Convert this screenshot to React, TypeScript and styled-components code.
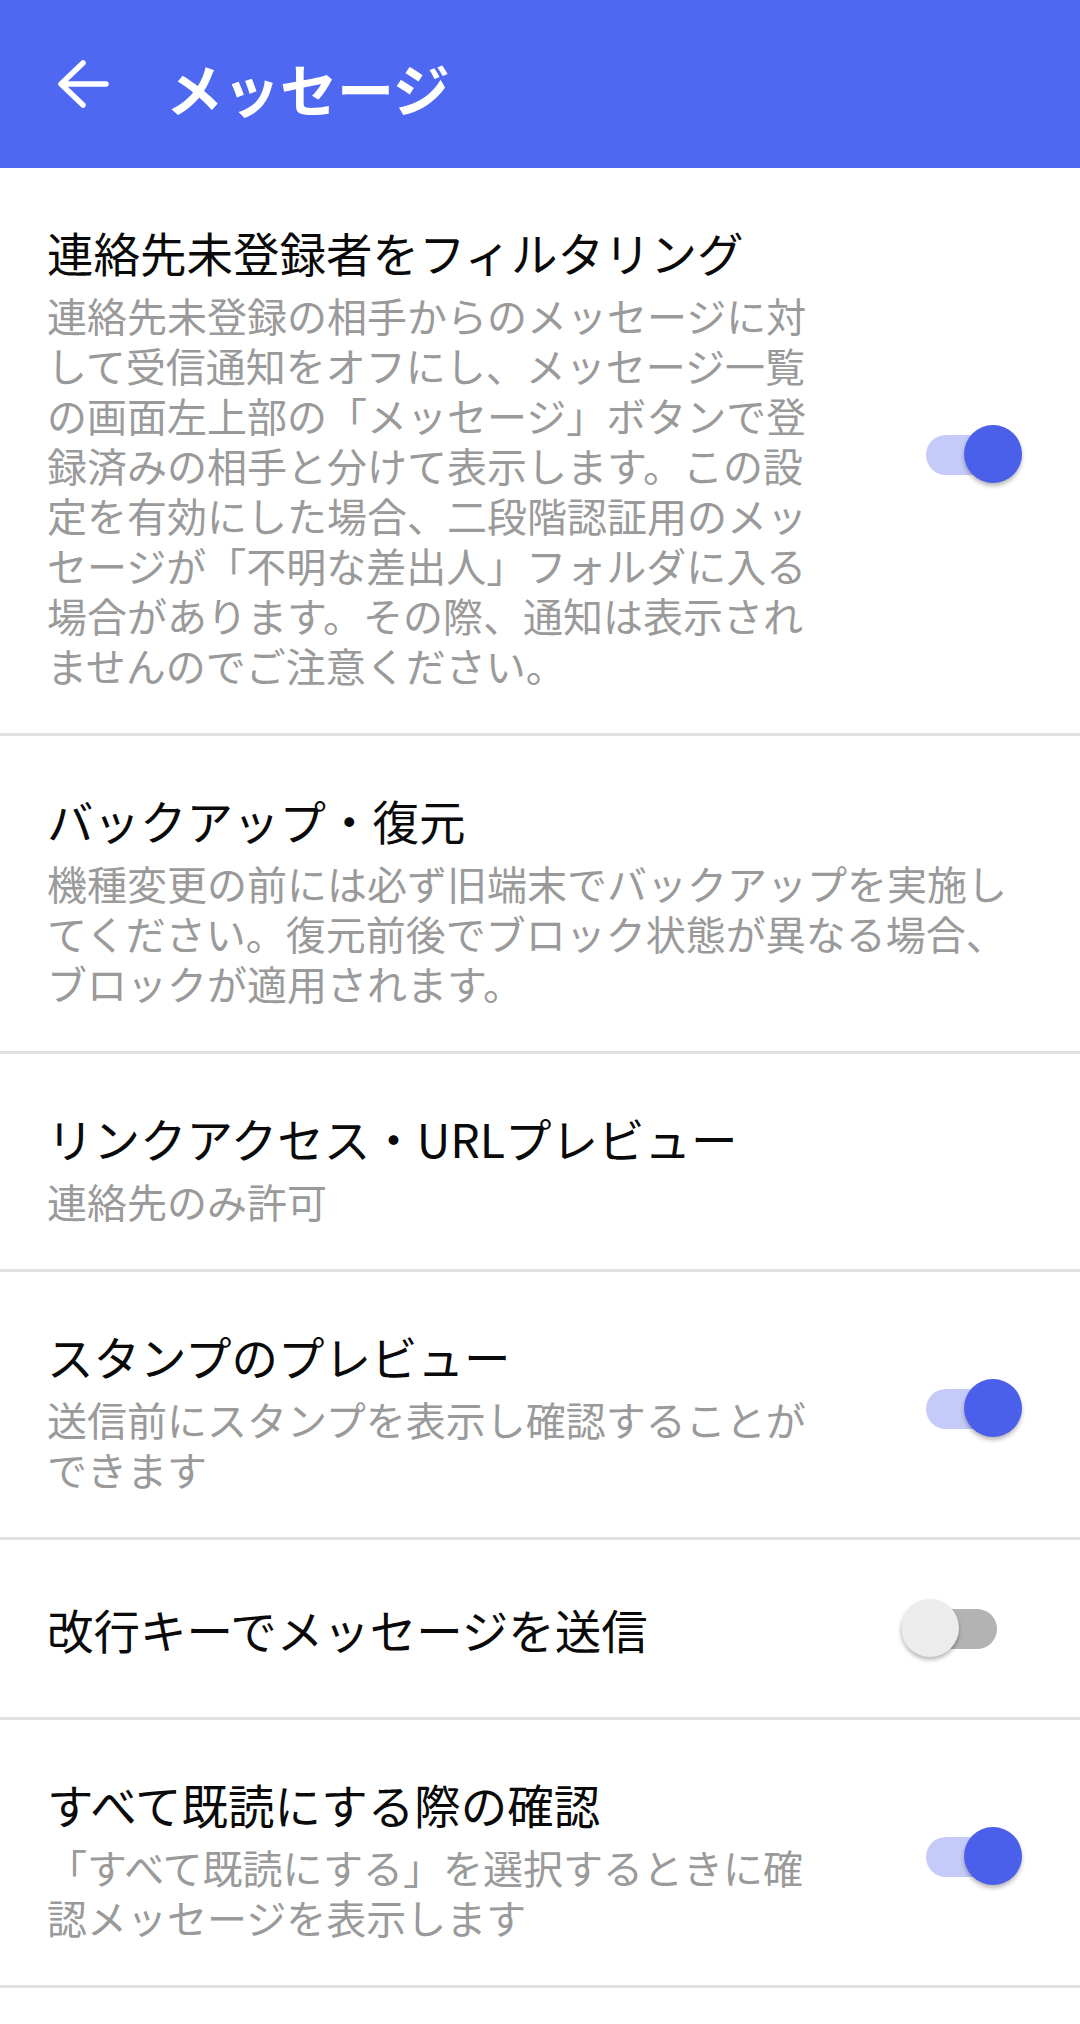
import React from 'react'
import styled, { createGlobalStyle, css } from 'styled-components'

const GlobalStyle = createGlobalStyle`
  html, body {
    margin: 0;
    padding: 0;
    background: #ffffff;
  }
  body {
    font-family: "Noto Sans CJK JP", "Noto Sans", sans-serif;
    -webkit-font-smoothing: antialiased;
  }
`

type Setting = {
  title: string
  lines?: string[]
  toggle?: 'on' | 'off'
  inset?: number
}

const settings: Setting[] = [
  {
    title: '連絡先未登録者をフィルタリング',
    lines: [
      '連絡先未登録の相手からのメッセージに対',
      'して受信通知をオフにし、メッセージ一覧',
      'の画面左上部の「メッセージ」ボタンで登',
      '録済みの相手と分けて表示します。この設',
      '定を有効にした場合、二段階認証用のメッ',
      'セージが「不明な差出人」フォルダに入る',
      '場合があります。その際、通知は表示され',
      'ませんのでご注意ください。',
    ],
    toggle: 'on',
  },
  {
    title: 'バックアップ・復元',
    lines: [
      '機種変更の前には必ず旧端末でバックアップを実施し',
      'てください。復元前後でブロック状態が異なる場合、',
      'ブロックが適用されます。',
    ],
  },
  {
    title: 'リンクアクセス・URLプレビュー',
    lines: ['連絡先のみ許可'],
  },
  {
    title: 'スタンプのプレビュー',
    lines: ['送信前にスタンプを表示し確認することが', 'できます'],
    toggle: 'on',
  },
  {
    title: '改行キーでメッセージを送信',
    toggle: 'off',
    inset: 83,
  },
  {
    title: 'すべて既読にする際の確認',
    lines: ['「すべて既読にする」を選択するときに確', '認メッセージを表示します'],
    toggle: 'on',
  },
]

function App() {
  return (
    <Screen>
      <GlobalStyle />
      <AppBar>
        <BackButton aria-label="戻る">
          <svg width="56" height="50" viewBox="0 0 56 50" fill="none">
            <path
              d="M7 25H52M29 4L7 25L29 46"
              stroke="#ffffff"
              strokeWidth="5.5"
              strokeLinecap="round"
              strokeLinejoin="round"
            />
          </svg>
        </BackButton>
        <BarTitle>メッセージ</BarTitle>
      </AppBar>

      <List>
        {settings.map((item) => (
          <Row key={item.title} $single={!item.lines}>
            <TextBlock>
              <ItemTitle>{item.title}</ItemTitle>
              {item.lines && <ItemDesc>{item.lines.join('\n')}</ItemDesc>}
            </TextBlock>
            {item.toggle && (
              <Track $on={item.toggle === 'on'} $inset={item.inset ?? 58}>
                <Thumb $on={item.toggle === 'on'} />
              </Track>
            )}
          </Row>
        ))}
      </List>
    </Screen>
  )
}

const Screen = styled.div`
  width: 1080px;
  min-height: 2024px;
  background: #ffffff;
`

const AppBar = styled.header`
  height: 168px;
  box-sizing: border-box;
  background: #4f68f2;
  display: flex;
  align-items: center;
  padding-left: 54px;
`

const BackButton = styled.div`
  display: flex;
  width: 56px;
  height: 50px;
`

const BarTitle = styled.h1`
  margin: 6px 0 0 56px;
  font-size: 57px;
  font-weight: 700;
  line-height: 1;
  color: #ffffff;
`

const List = styled.div`
  display: flex;
  flex-direction: column;
`

const Row = styled.div<{ $single: boolean }>`
  display: flex;
  align-items: center;
  padding: 52px 0 43px 47px;
  border-bottom: 3px solid #e2e2e2;
  ${(p) =>
    p.$single &&
    css`
      padding-top: 0;
      padding-bottom: 0;
      height: 177px;
    `}
`

const TextBlock = styled.div`
  flex: 1;
  min-width: 0;
`

const ItemTitle = styled.div`
  font-size: 46.5px;
  line-height: 64px;
  color: #0a0a0a;
  white-space: nowrap;
`

const ItemDesc = styled.div`
  margin-top: 6px;
  font-size: 40px;
  line-height: 50px;
  color: #9a9a9a;
  white-space: pre-line;
`

const Track = styled.div<{ $on: boolean; $inset: number }>`
  position: relative;
  flex-shrink: 0;
  width: 96px;
  height: 40px;
  margin: 0 ${(p) => p.$inset}px 0 24px;
  border-radius: 20px;
  background: ${(p) => (p.$on ? '#c4cbf9' : '#b3b3b3')};
`

const Thumb = styled.span<{ $on: boolean }>`
  position: absolute;
  top: 50%;
  width: 58px;
  height: 58px;
  margin-top: -30px;
  border-radius: 50%;
  ${(p) => (p.$on ? 'right: 0;' : 'left: 0;')}
  background: ${(p) => (p.$on ? '#4b60ea' : '#ececec')};
  box-shadow: 0 3px 4px rgba(0, 0, 0, 0.28);
`

export default App
